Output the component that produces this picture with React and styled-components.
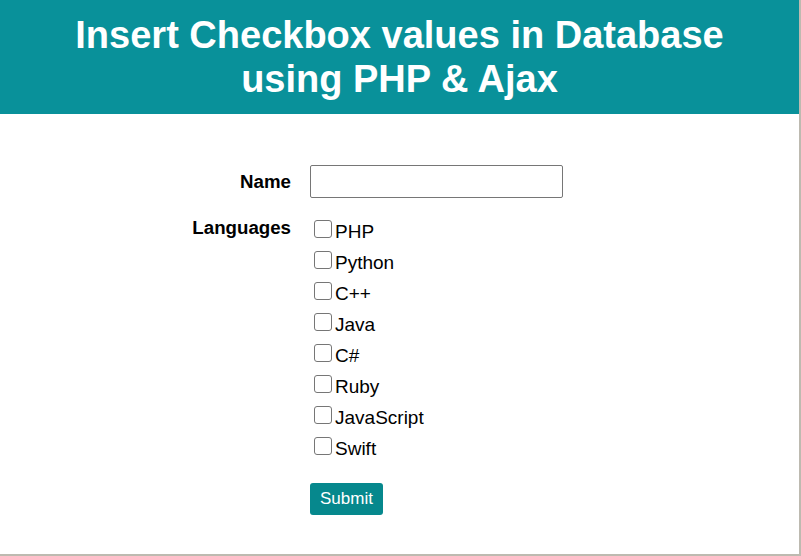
import { createGlobalStyle, styled } from "styled-components";

const GlobalStyle = createGlobalStyle`
  html, body {
    margin: 0;
    padding: 0;
    background: #ffffff;
  }
  body {
    font-family: "Liberation Sans", Arial, sans-serif;
  }
`;

const Page = styled.div`
  box-sizing: border-box;
  width: 801px;
  height: 556px;
  border-right: 2px solid #bdbab0;
  border-bottom: 2px solid #bdbab0;
  overflow: hidden;
`;

const Header = styled.header`
  background: #09919a;
  padding: 14px 20px 13px;
`;

const Title = styled.h1`
  margin: 0;
  color: #ffffff;
  font-size: 38px;
  font-weight: 700;
  line-height: 1.15;
  text-align: center;
`;

const Form = styled.form`
  display: grid;
  grid-template-columns: 291px 253px;
  column-gap: 19px;
  row-gap: 18px;
  padding-top: 51px;
`;

const Label = styled.label`
  font-size: 18.7px;
  font-weight: 700;
  color: #000;
  text-align: right;
  align-self: ${({ $top }) => ($top ? "start" : "center")};
  padding-top: ${({ $top }) => ($top ? "1px" : "0")};
`;

const TextInput = styled.input`
  box-sizing: border-box;
  width: 253px;
  height: 33px;
  border: 1px solid #767676;
  border-radius: 2px;
  padding: 2px 6px;
  font-size: 16px;
  font-family: inherit;
  outline: none;
`;

const Options = styled.div`
  display: flex;
  flex-direction: column;
`;

const Option = styled.label`
  display: block;
  font-size: 19px;
  line-height: 31px;
  color: #000;
  white-space: nowrap;
`;

const Check = styled.input`
  appearance: none;
  display: inline-block;
  box-sizing: border-box;
  width: 18px;
  height: 18px;
  margin: 0 3px 0 4px;
  border: 1px solid #767676;
  border-radius: 3px;
  background: #fff;
  vertical-align: baseline;
`;

const Spacer = styled.div``;

const SubmitButton = styled.button`
  justify-self: start;
  margin-top: 1px;
  height: 32px;
  padding: 0 10px;
  border: none;
  border-radius: 3px;
  background: #06888d;
  color: #ffffff;
  font-family: inherit;
  font-size: 17px;
  cursor: pointer;
`;

const languages = ["PHP", "Python", "C++", "Java", "C#", "Ruby", "JavaScript", "Swift"];

export default function App() {
  return (
    <Page>
      <GlobalStyle />
      <Header>
        <Title>
          Insert Checkbox values in Database
          <br />
          using PHP &amp; Ajax
        </Title>
      </Header>
      <Form onSubmit={(e) => e.preventDefault()}>
        <Label htmlFor="name">Name</Label>
        <TextInput id="name" type="text" />

        <Label $top>Languages</Label>
        <Options>
          {languages.map((lang) => (
            <Option key={lang}>
              <Check type="checkbox" value={lang} />
              {lang}
            </Option>
          ))}
        </Options>

        <Spacer />
        <SubmitButton type="submit">Submit</SubmitButton>
      </Form>
    </Page>
  );
}
